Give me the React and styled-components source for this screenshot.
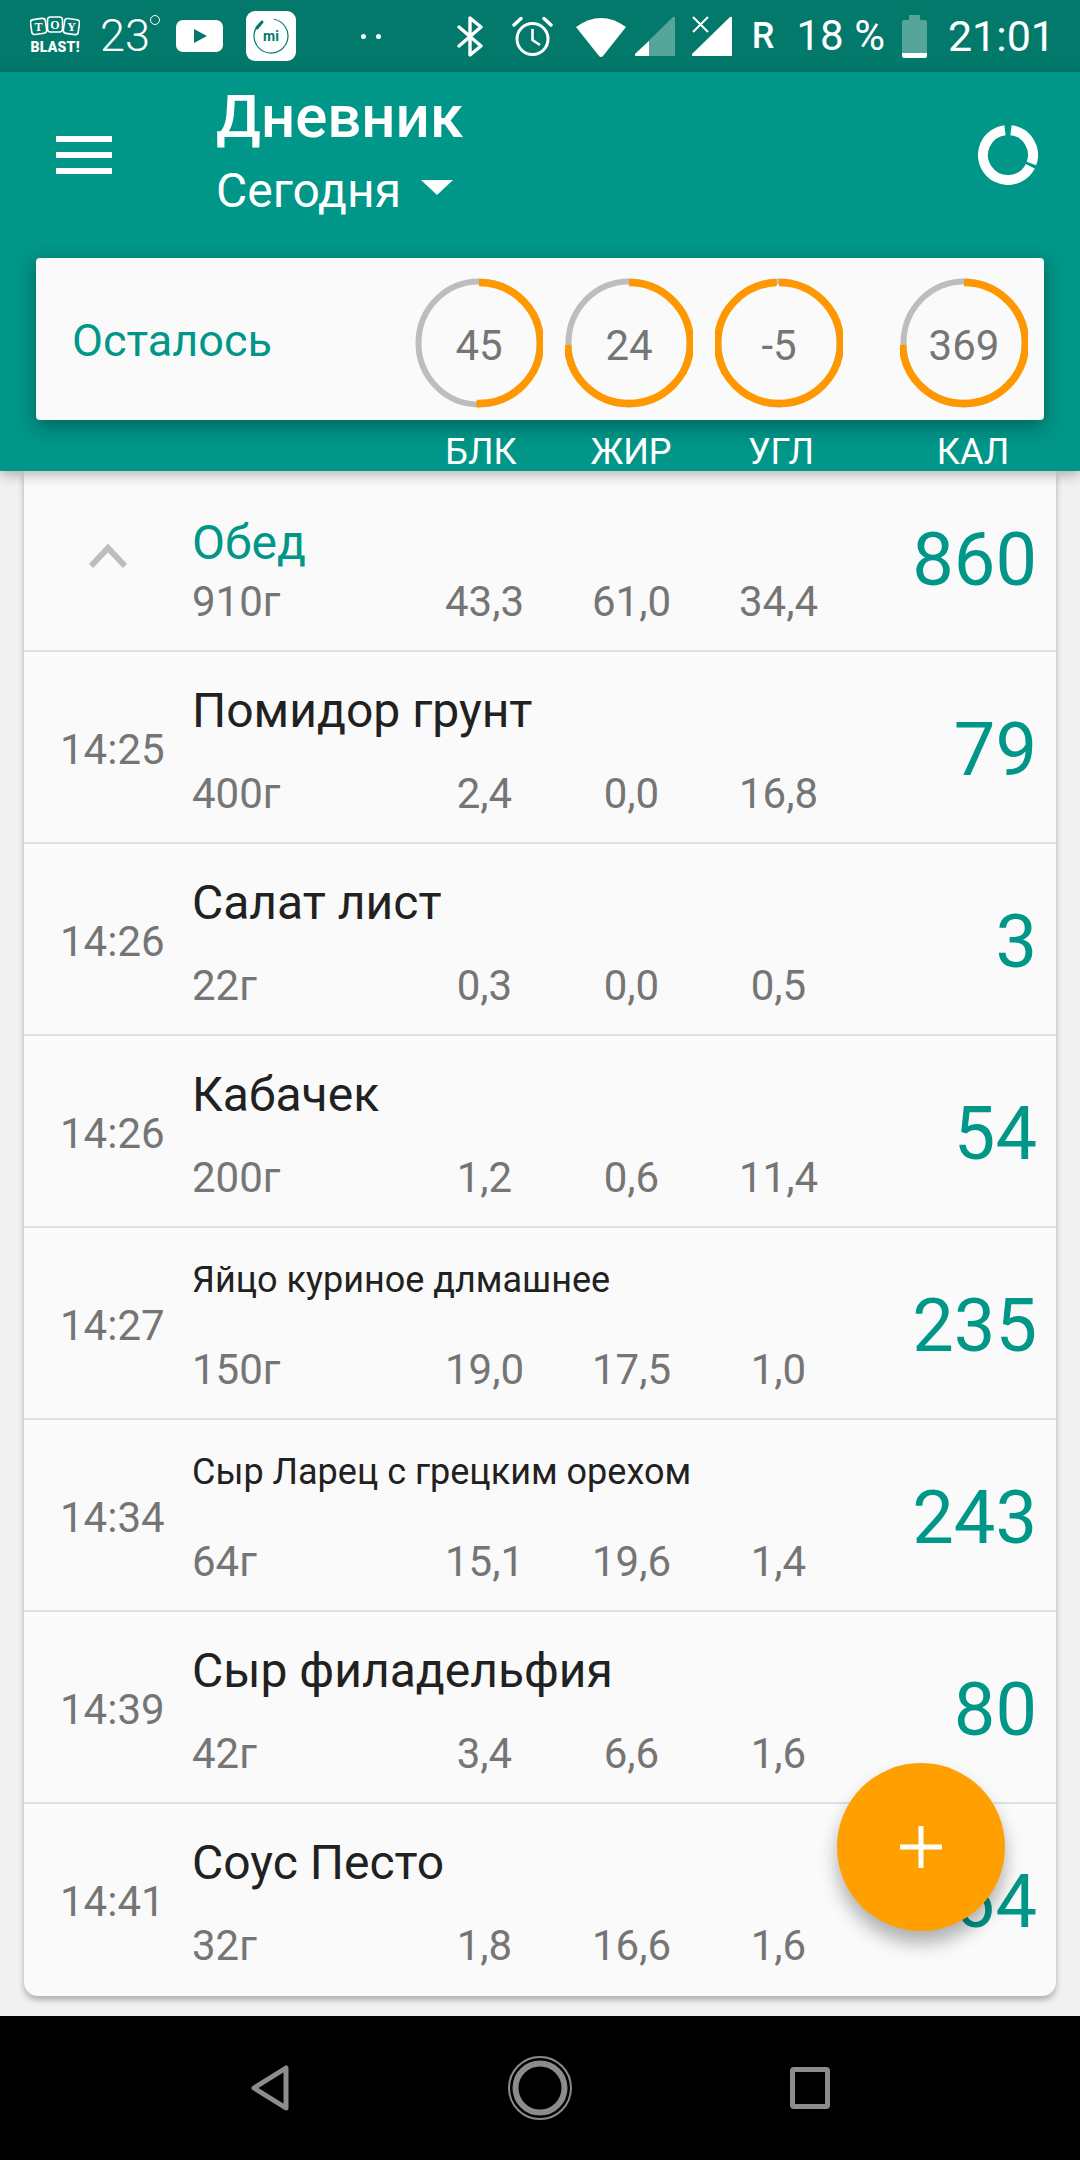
import React from 'react';
import styled, { createGlobalStyle } from 'styled-components';

const GlobalStyle = createGlobalStyle`
    html, body {
        margin: 0;
        padding: 0;
        background-color: #f1f1f1;
    }
`;

const Page = styled.div`
    position: relative;
    display: flex;
    flex-direction: column;
    width: 1080px;
    height: 2160px;
    overflow: hidden;
    font-family: Roboto, "Noto Sans", sans-serif;
    background-color: #f1f1f1;
`;

const StatusBar = styled.div`
    display: flex;
    align-items: center;
    justify-content: space-between;
    height: 72px;
    padding: 0 25px 0 30px;
    box-sizing: border-box;
    background-color: #02796b;
    color: #fff;
`;

const StatusGroup = styled.div`
    display: flex;
    align-items: center;
`;

const StatusIcon = styled.svg`
    display: block;
    flex: none;
    margin-left: ${p => p.$gap || 0}px;
`;

const StatusText = styled.span`
    margin-left: ${p => p.$gap || 0}px;
    font-size: ${p => p.$size || 42}px;
    font-weight: ${p => p.$weight || 400};
    line-height: 72px;
    white-space: nowrap;
`;

const Degree = styled.span`
    display: inline-block;
    width: 8px;
    height: 8px;
    margin: 0 0 32px 0;
    border: solid 1.5px #fff;
    border-radius: 50%;
`;

const Dots = styled.div`
    display: flex;
    gap: 10px;
    margin-left: 65px;

    i {
        width: 5px;
        height: 5px;
        border-radius: 50%;
        background-color: #fff;
    }
`;

const Header = styled.header`
    position: relative;
    z-index: 2;
    height: 399px;
    background-color: #009688;
    box-shadow: 0 4px 12px rgba(0, 0, 0, 0.28);
`;

const Toolbar = styled.div`
    display: flex;
    align-items: center;
    height: 166px;
    padding: 0 42px 0 56px;
    box-sizing: border-box;
`;

const Burger = styled.div`
    display: flex;
    flex-direction: column;
    gap: 10px;
    width: 56px;

    i {
        height: 6px;
        background-color: #fff;
    }
`;

const Titles = styled.div`
    flex: 1;
    margin: -4px 0 0 104px;
    color: #fff;
`;

const Title = styled.div`
    font-size: 60px;
    font-weight: 500;
    line-height: 70px;
`;

const DateLine = styled.div`
    display: flex;
    align-items: center;
    margin-top: 6px;
    font-size: 48px;
    line-height: 66px;

    i {
        width: 0;
        height: 0;
        margin: 0 0 8px 20px;
        border-left: solid 16px transparent;
        border-right: solid 16px transparent;
        border-top: solid 15px #fff;
    }
`;

const Summary = styled.div`
    display: flex;
    align-items: center;
    height: 162px;
    margin: 20px 36px 0;
    padding: 0 16px 0 36px;
    box-sizing: border-box;
    background-color: #fafafa;
    border-radius: 4px;
    box-shadow: 0 6px 20px rgba(0, 0, 0, 0.35);
`;

const SummaryLabel = styled.div`
    flex: 1;
    margin-top: 2px;
    font-size: 45px;
    color: #009688;
`;

const Ring = styled.div`
    position: relative;
    width: 128px;
    height: 130px;
    margin: 8px 0 0 ${p => p.$gap}px;
    padding-top: 4px;
    box-sizing: border-box;
    display: flex;
    align-items: center;
    justify-content: center;
    font-size: 42px;
    color: #757575;

    svg {
        position: absolute;
        inset: 0;
    }
`;

const Macros = styled.div`
    display: grid;
    grid-template-columns: 150px 150px 150px 234px;
    padding-left: 406px;
    margin-top: 11px;
    font-size: 36px;
    line-height: 42px;
    color: #fff;

    span {
        text-align: center;
    }
`;

const Content = styled.main`
    flex: 1;
    padding: 0 24px 20px;
`;

const Card = styled.div`
    height: 100%;
    background-color: #fafafa;
    border-radius: 0 0 14px 14px;
    box-shadow: 0 4px 6px rgba(0, 0, 0, 0.28);
`;

const Row = styled.div`
    display: grid;
    grid-template-columns: 168px 219px 147px 147px 147px 1fr;
    grid-template-rows: ${p => p.$group ? '109px 44px' : '120px 44px'};
    height: ${p => p.$height}px;
    box-sizing: border-box;
    padding-right: 19px;
    border-bottom: ${p => p.$last ? 'none' : 'solid 2px #e0e0e0'};
`;

const Lead = styled.div`
    grid-row: 1 / 3;
    display: flex;
    align-items: center;
    justify-content: ${p => p.$center ? 'center' : 'flex-start'};
    padding-left: ${p => p.$center ? '0' : '36px'};
    padding-right: ${p => p.$center ? '1px' : '0'};
    height: ${p => p.$height}px;
    font-size: 42px;
    color: #757575;
`;

const Name = styled.div`
    grid-column: 2 / 6;
    align-self: end;
    padding-bottom: ${p => p.$group ? '12px' : p.$small ? '48px' : '34px'};
    font-size: ${p => p.$group ? 48 : p.$small ? 36 : 48}px;
    line-height: ${p => p.$group ? 50 : p.$small ? 40 : 54}px;
    color: ${p => p.$group ? '#009688' : '#212121'};
    white-space: nowrap;
`;

const Weight = styled.div`
    grid-column: 2;
    grid-row: 2;
    font-size: 42px;
    line-height: 44px;
    color: #757575;
`;

const Stat = styled(Weight)`
    grid-column: ${p => p.$col};
    text-align: center;
`;

const Calories = styled.div`
    grid-column: 6;
    grid-row: 1 / 3;
    justify-self: end;
    display: flex;
    align-items: center;
    height: ${p => p.$height}px;
    font-size: 74px;
    color: #009688;
`;

const Fab = styled.button`
    position: absolute;
    left: 837px;
    top: 1763px;
    z-index: 3;
    display: flex;
    align-items: center;
    justify-content: center;
    width: 168px;
    height: 168px;
    padding: 0;
    border: none;
    border-radius: 50%;
    background-color: #ffa000;
    box-shadow: 0 12px 18px rgba(0, 0, 0, 0.3);
`;

const NavBar = styled.nav`
    position: relative;
    z-index: 4;
    display: flex;
    align-items: center;
    height: 144px;
    padding-left: 251px;
    background-color: #000;
`;

const NavIcon = styled.svg`
    display: block;
    margin-left: ${p => p.$gap || 0}px;
`;

const ringPath = 2 * Math.PI * 60.5;

const ProgressRing = ({ value, part, gap }) => (
    <Ring $gap={gap}>
        <svg width="128" height="130" viewBox="0 0 128 130">
            <ellipse cx="64" cy="65" rx="60.5" ry="61.5" fill="none" stroke="#bdbdbd" strokeWidth="6" />
            <ellipse cx="64" cy="65" rx="60.5" ry="61.5" fill="none" stroke="#ff9800" strokeWidth="7.5"
                strokeDasharray={`${part * ringPath} ${ringPath}`} transform="rotate(-90 64 65)" />
        </svg>
        {value}
    </Ring>
);

const items = [
    { time: '14:25', name: 'Помидор грунт', weight: '400г', p: '2,4', f: '0,0', c: '16,8', kcal: '79' },
    { time: '14:26', name: 'Салат лист', weight: '22г', p: '0,3', f: '0,0', c: '0,5', kcal: '3' },
    { time: '14:26', name: 'Кабачек', weight: '200г', p: '1,2', f: '0,6', c: '11,4', kcal: '54' },
    { time: '14:27', name: 'Яйцо куриное длмашнее', small: true, weight: '150г', p: '19,0', f: '17,5', c: '1,0', kcal: '235' },
    { time: '14:34', name: 'Сыр Ларец с грецким орехом', small: true, weight: '64г', p: '15,1', f: '19,6', c: '1,4', kcal: '243' },
    { time: '14:39', name: 'Сыр филадельфия', weight: '42г', p: '3,4', f: '6,6', c: '1,6', kcal: '80' },
    { time: '14:41', name: 'Соус Песто', weight: '32г', p: '1,8', f: '16,6', c: '1,6', kcal: '64', last: true },
];

const App = () => {
    return (
        <Page>
            <GlobalStyle />
            <StatusBar>
                <StatusGroup>
                    <StatusIcon width="50" height="40" viewBox="0 0 50 40">
                        <g fill="none" stroke="#fff" strokeWidth="1.6">
                            <rect x="1" y="3" width="15" height="15" rx="3" transform="rotate(-8 8 10)" />
                            <rect x="17.5" y="1" width="15" height="15" rx="3" />
                            <rect x="34" y="3" width="15" height="15" rx="3" transform="rotate(8 41 10)" />
                        </g>
                        <g fill="#fff" fontFamily="Liberation Serif, serif" fontWeight="700" fontSize="12" textAnchor="middle">
                            <text x="8.5" y="15">T</text>
                            <text x="25" y="13">O</text>
                            <text x="41.5" y="15">Y</text>
                        </g>
                        <text x="25" y="36" fill="#fff" fontFamily="Roboto, sans-serif" fontWeight="900" fontSize="14" textAnchor="middle" textLength="49">BLAST!</text>
                    </StatusIcon>
                    <StatusText $gap={20} $size={45} $weight={300}>23</StatusText>
                    <Degree />
                    <StatusIcon $gap={16} width="47" height="32" viewBox="0 0 47 32">
                        <rect width="47" height="32" rx="7" fill="#fff" />
                        <path d="M18 9 L31 16 L18 23 Z" fill="#02796b" />
                    </StatusIcon>
                    <StatusIcon $gap={23} width="50" height="50" viewBox="0 0 50 50">
                        <rect width="50" height="50" rx="9" fill="#fff" />
                        <circle cx="25" cy="25" r="17" fill="none" stroke="#02796b" strokeWidth="1.2" strokeDasharray="90 17" transform="rotate(-80 25 25)" />
                        <path d="M11 17 L16 11" stroke="#02796b" strokeWidth="3" strokeLinecap="round" />
                        <text x="25" y="30" fill="#02796b" fontFamily="Roboto, sans-serif" fontWeight="700" fontSize="14" textAnchor="middle">mi</text>
                    </StatusIcon>
                    <Dots><i /><i /></Dots>
                </StatusGroup>
                <StatusGroup>
                    <StatusIcon width="26" height="41" viewBox="0 0 26 41">
                        <path d="M2 11 L24 30 L13 39 V2 L24 11 L2 30" fill="none" stroke="#fff" strokeWidth="3.4" strokeLinejoin="round" strokeLinecap="round" />
                    </StatusIcon>
                    <StatusIcon $gap={29} width="41" height="41" viewBox="0 0 41 41">
                        <circle cx="20.5" cy="23" r="15.5" fill="none" stroke="#fff" strokeWidth="3" />
                        <path d="M20.5 13 V24 L28 29" fill="none" stroke="#fff" strokeWidth="2.6" />
                        <path d="M2 9 L9 2.5 M39 9 L32 2.5" stroke="#fff" strokeWidth="3.4" strokeLinecap="round" />
                    </StatusIcon>
                    <StatusIcon $gap={22} width="52" height="41" viewBox="0 0 52 41">
                        <path d="M1 11 Q26 -7 51 11 L28 40 Q26 42 24 40 Z" fill="#fff" />
                    </StatusIcon>
                    <StatusIcon $gap={8} width="40" height="40" viewBox="0 0 40 40">
                        <path d="M0 38 L38 1 Q40 0 40 2 V40 H2 Q-1 40 0 38 Z" fill="#fff" opacity="0.33" />
                        <path d="M0 38 L14 25 V40 H2 Q-1 40 0 38 Z" fill="#fff" />
                    </StatusIcon>
                    <StatusIcon $gap={17} width="40" height="40" viewBox="0 0 40 40">
                        <path d="M0 38 L38 1 Q40 0 40 2 V40 H2 Q-1 40 0 38 Z" fill="#fff" />
                        <path d="M1 1 L16 16 M16 1 L1 16" stroke="#02796b" strokeWidth="5" />
                        <path d="M1 1 L16 16 M16 1 L1 16" stroke="#fff" strokeWidth="2" />
                    </StatusIcon>
                    <StatusText $gap={20} $size={36} $weight={500}>R</StatusText>
                    <StatusText $gap={22} $size={42}>18 %</StatusText>
                    <StatusIcon $gap={17} width="25" height="43" viewBox="0 0 25 43">
                        <path d="M7 0 H18 V5 H23 Q25 5 25 7 V38 H0 V7 Q0 5 2 5 H7 Z" fill="#fff" opacity="0.33" />
                        <path d="M0 38 H25 V41 Q25 43 23 43 H2 Q0 43 0 41 Z" fill="#fff" />
                    </StatusIcon>
                    <StatusText $gap={21} $size={43}>21:01</StatusText>
                </StatusGroup>
            </StatusBar>

            <Header>
                <Toolbar>
                    <Burger><i /><i /><i /></Burger>
                    <Titles>
                        <Title>Дневник</Title>
                        <DateLine>Сегодня<i /></DateLine>
                    </Titles>
                    <svg width="60" height="60" viewBox="0 0 60 60" fill="none" stroke="#fff" strokeWidth="10">
                        <path d="M33 5.2 A25 25 0 0 1 53.5 38.5" />
                        <path d="M52.3 41.3 A25 25 0 1 1 27 5.2" />
                    </svg>
                </Toolbar>
                <Summary>
                    <SummaryLabel>Осталось</SummaryLabel>
                    <ProgressRing value="45" part={0.51} gap={0} />
                    <ProgressRing value="24" part={0.75} gap={22} />
                    <ProgressRing value="-5" part={1} gap={22} />
                    <ProgressRing value="369" part={0.75} gap={57} />
                </Summary>
                <Macros>
                    <span>БЛК</span>
                    <span>ЖИР</span>
                    <span>УГЛ</span>
                    <span>КАЛ</span>
                </Macros>
            </Header>

            <Content>
                <Card>
                    <Row $group $height={181}>
                        <Lead $center $height={170}>
                            <svg width="38" height="24" viewBox="0 0 38 24" fill="none" stroke="#bdbdbd" strokeWidth="6">
                                <path d="M2 22 L19 4 L36 22" />
                            </svg>
                        </Lead>
                        <Name $group>Обед</Name>
                        <Weight>910г</Weight>
                        <Stat $col={3}>43,3</Stat>
                        <Stat $col={4}>61,0</Stat>
                        <Stat $col={5}>34,4</Stat>
                        <Calories $height={176}>860</Calories>
                    </Row>
                    {items.map(item => (
                        <Row key={item.time + item.name} $height={192} $last={item.last}>
                            <Lead $height={194}>{item.time}</Lead>
                            <Name $small={item.small}>{item.name}</Name>
                            <Weight>{item.weight}</Weight>
                            <Stat $col={3}>{item.p}</Stat>
                            <Stat $col={4}>{item.f}</Stat>
                            <Stat $col={5}>{item.c}</Stat>
                            <Calories $height={194}>{item.kcal}</Calories>
                        </Row>
                    ))}
                </Card>
            </Content>

            <Fab aria-label="add">
                <svg width="42" height="42" viewBox="0 0 42 42" fill="#fff">
                    <path d="M18.5 0 H23.5 V18.5 H42 V23.5 H23.5 V42 H18.5 V23.5 H0 V18.5 H18.5 Z" />
                </svg>
            </Fab>

            <NavBar>
                <NavIcon width="38" height="46" viewBox="0 0 38 46" fill="none" stroke="#8c8c8c" strokeWidth="5" strokeLinejoin="round">
                    <path d="M35 3 V43 L3 23 Z" />
                </NavIcon>
                <NavIcon $gap={219} width="64" height="66" viewBox="0 0 64 66" fill="none" stroke="#8c8c8c">
                    <circle cx="32" cy="33" r="24.5" strokeWidth="6" />
                    <circle cx="32" cy="33" r="31" strokeWidth="2" />
                </NavIcon>
                <NavIcon $gap={218} width="40" height="42" viewBox="0 0 40 42" fill="none" stroke="#8c8c8c" strokeWidth="5">
                    <rect x="2.5" y="2.5" width="35" height="37" rx="1.5" />
                </NavIcon>
            </NavBar>
        </Page>
    );
};

export default App;
